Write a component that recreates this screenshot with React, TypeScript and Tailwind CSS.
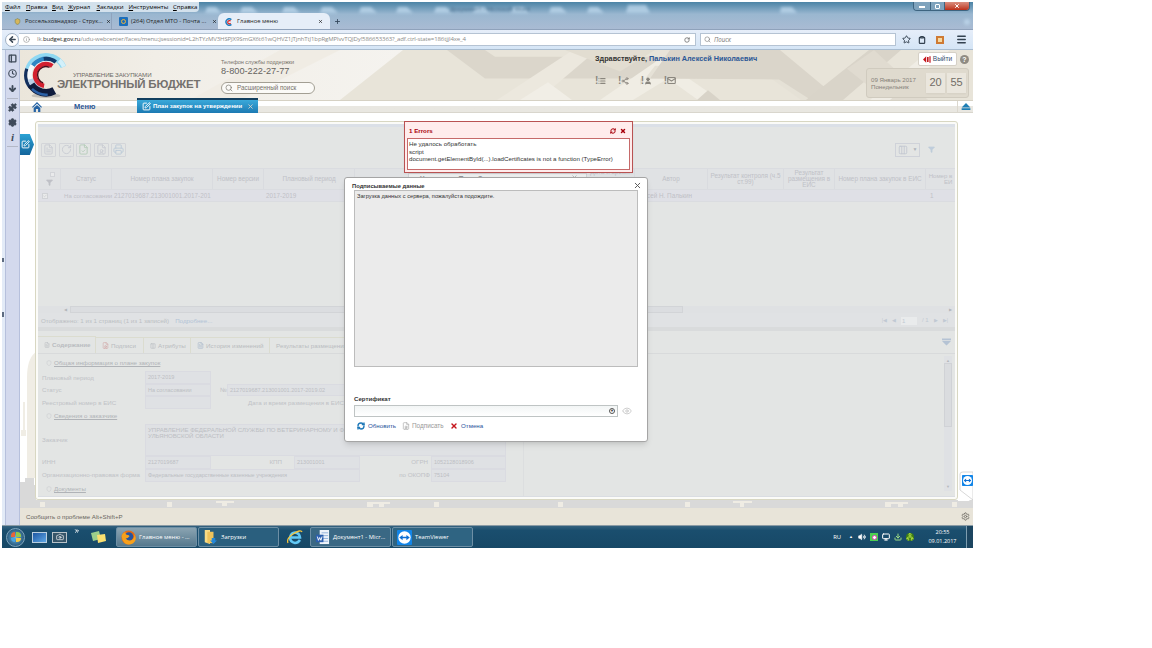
import type {ReactNode} from "react";
import clsx from "clsx";
import {
    ArrowLeft, ArrowDown, Camera, ChevronsRight, Clock, Download, FileText, Filter, Info, List, Mail,
    Menu, Monitor, Plus, Printer, Puzzle, RefreshCw, RotateCw, Search, Settings, Share2, SquarePen, Star,
    User, Volume2, X, Eye, FileCheck, FileUser, PanelLeft, Network, Shield, Clipboard, Columns3, Check
} from "lucide-react";

interface ChildrenProps {
    children?: ReactNode;
    className?: string;
}

const menuItems = [
    {label: "Файл", width: "w-[21px]"},
    {label: "Правка", width: "w-[26px]"},
    {label: "Вид", width: "w-[16px]"},
    {label: "Журнал", width: "w-[28.5px]"},
    {label: "Закладки", width: "w-[32px]"},
    {label: "Инструменты", width: "w-[44.5px]"},
    {label: "Справка", width: "w-[24px]"},
];

const TeamViewerIcon = ({className}: { className?: string }) => (
    <svg viewBox="0 0 16 16" className={className}>
        <rect width="16" height="16" rx="1" fill="#1285e8"/>
        <circle cx="8" cy="8" r="6.6" fill="#fff"/>
        <path d="M2.4 8 6 5.2v1.9h4V5.2L13.6 8 10 10.800V8.900H6v1.900z" fill="#0d6fd4"/>
    </svg>
);

// start and length of every ring segment are degrees
const logoRings = [
    {r: 21, start: 195, length: 100, width: 3.5, color: "#8fd8f3"},
    {r: 20, start: 285, length: 50, width: 6, color: "#8fd8f0"},
    {r: 20.5, start: 312, length: 23, width: 4.500, color: "#d3f0fa"},
    {r: 17, start: 215, length: 70, width: 4.5, color: "#2f86c4"},
    {r: 17, start: 262, length: 45, width: 4, color: "#123a6b"},
    {r: 21, start: 140, length: 58, width: 3.5, color: "#13305e"},
    {r: 17, start: 160, length: 55, width: 4.5, color: "#f5f8fb"},
    {r: 16.5, start: 110, length: 55, width: 6.5, color: "#b9cfe6"},
    {r: 18.5, start: 62, length: 85, width: 8, color: "#101c3c"},
    {r: 20.5, start: 85, length: 50, width: 2.500, color: "#2c62a8"},
    {r: 13.5, start: 215, length: 85, width: 2, color: "#e8eef5"},
    {r: 11.5, start: 100, length: 205, width: 4.500, color: "#d3202f"},
    {r: 8.8, start: 110, length: 185, width: 1.500, color: "#4a0d1b"},
];

const LogoMark = ({className}: { className?: string }) => (
    <svg viewBox="0 0 48 50" className={className} fill="none">
        <ellipse cx="24" cy="46.500" rx="15" ry="2.500" fill="#c4c1b9"/>
        {logoRings.map((ring, i) => (
            <circle key={i} cx="24" cy="25" r={ring.r} pathLength={360} stroke={ring.color} strokeWidth={ring.width}
                    strokeDasharray={`${ring.length} 360`} transform={`rotate(${ring.start} 24 25)`}/>
        ))}
    </svg>
);

const GlassReflections = () => (
    <svg viewBox="2 2 971 27" preserveAspectRatio="none" className="absolute inset-0 size-full">
        <defs>
            <filter id="glass" x="-20%" y="-60%" width="140%" height="220%"><feGaussianBlur stdDeviation="1.500"/></filter>
        </defs>
        <g filter="url(#glass)" fill="#c3dcf0" opacity="0.700">
            <path d="M205 13l2-6h9l5 6zM240 13l2-6h10l6 6zM282 13l2-6h10l6 6zM320 13l2-6h10l6 6zM359 13l2-6h10l6 6zM396 13l2-6h9l6 6zM434 13l2-6h10l6 6zM473 13l2-6h9l6 6zM511 13l2-6h10l6 6zM549 13l2-6h10l6 6zM587 13l2-6h9l6 6zM626 13l2-8h18l4 8zM780 13l1-6h11l5 6z"/>
            <circle cx="967" cy="22" r="3"/>
        </g>
    </svg>
);

const TitleBar = () => (
    <div className="relative h-[27px] bg-linear-to-b from-[#4b84a6] via-[#9ab7d0] via-45% to-[#a9bbd3]">
        <GlassReflections/>
        <span className="absolute top-[2px] left-[448px] text-[6px] leading-[10px] whitespace-nowrap text-[#4c6f8e] blur-[1px]">Документ1 - Microsoft Word</span>
        <div className="relative flex h-[11px] items-start justify-between">
            <div className="flex h-[10px] w-[197px] items-center rounded-br-sm bg-[#d3e1ec] pl-[3px] text-[6px] text-black">
                {menuItems.map(item => (
                    <span key={item.label} className={clsx("whitespace-nowrap first-letter:underline", item.width)}>
                        {item.label}
                    </span>
                ))}
            </div>
            <div className="mr-[3px] flex h-[9px] overflow-hidden rounded-b-sm border border-t-0 border-[#3d6480] text-white">
                <span className="flex w-[16px] items-end justify-center bg-[#7fa3bd] pb-[2px]"><i className="h-[2px] w-[6px] bg-white"/></span>
                <span className="flex w-[15px] items-center justify-center border-x border-[#3d6480] bg-[#7fa3bd]"><i className="size-[5px] rounded-[1px] border border-white"/></span>
                <span className="flex w-[24px] items-center justify-center bg-linear-to-b from-[#d98e80] to-[#bb2c15]"><X size={6} strokeWidth={4}/></span>
            </div>
        </div>
        <div className="relative flex h-[16px] items-center text-[5.850px] text-[#1c1c1c]">
            <div className="flex h-full w-[109px] items-center pt-px pl-[12px]">
                <Shield size={7} className="mr-[4px] fill-[#d7b65a] text-[#7a7f4a]"/>
                <span className="w-[81px] whitespace-nowrap">Россельхознадзор - Струк...</span>
                <X size={5} strokeWidth={3} className="shrink-0"/>
            </div>
            <div className="flex h-full w-[107px] items-center border-l border-[#8fa3bd] pt-px pl-[7px]">
                <span className="mr-[3px] flex size-[9px] shrink-0 items-center justify-center rounded-[1px] bg-[#1d6fbb]">
                    <i className="size-[5px] rounded-full border border-[#f0b43a]"/>
                </span>
                <span className="w-[81px] whitespace-nowrap">(264) Отдел МТО - Почта ...</span>
                <X size={5} strokeWidth={3} className="shrink-0"/>
            </div>
            <div className="flex h-full w-[112px] items-center rounded-t-md bg-[#e6eef8] pt-px pl-[7px]">
                <svg viewBox="0 0 10 10" className="mr-[4px] size-[8px]" fill="none">
                    <path d="M8 2A4 4 0 1 0 8 8" stroke="#1f7fc0" strokeWidth="1.800"/>
                    <path d="M7 4A2 2 0 1 0 7 6.500" stroke="#d22" strokeWidth="1.500"/>
                </svg>
                <span className="w-[81px] whitespace-nowrap">Главное меню</span>
                <X size={5} strokeWidth={3}/>
            </div>
            <Plus size={7} strokeWidth={3} className="ml-[4px] text-[#33475c]"/>
        </div>
    </div>
);

const AddressBar = () => (
    <div className="flex h-[21px] items-center border-y border-t-[#8fa2bb] border-b-[#a9bccf] bg-linear-to-b from-[#e6eef9] to-[#d5e5f6]">
        <div className="ml-[3px] flex size-[14px] items-center justify-center rounded-full border border-[#9fb0c4] bg-white">
            <ArrowLeft size={9} strokeWidth={4} className="text-[#3b4856]"/>
        </div>
        <div className="flex h-[13px] w-[677px] items-center border border-l-0 border-[#b5c3d3] bg-white pl-[4px] text-[6.050px] text-[#8b8b8b]">
            <Info size={7} className="mr-[7px]"/>
            <span className="w-[648px] whitespace-nowrap tracking-[-0.130px]">
                lk.<span className="text-[#222]">budget.gov.ru</span>/udu-webcenter/faces/menu;jsessionid=L2hTYzMV3HSPJX9SmGX6t61wQHVZ1jTjnhTtJ1bpRgMPlvvTQJDy!586653363?_adf.ctrl-state=186tjjl4xe_4
            </span>
            <RotateCw size={6} strokeWidth={3} className="mr-[5px] shrink-0 text-[#666]"/>
        </div>
        <div className="ml-[4px] flex h-[13px] w-[196px] items-center border border-[#b5c3d3] bg-white pl-[3px] text-[6.2px] text-[#777] italic">
            <Search size={7} className="mr-[3px]"/>Поиск
        </div>
        <div className="flex grow items-center pl-[6px] text-[#33414f]">
            <Star size={9} strokeWidth={2.5}/>
            <Clipboard size={8} strokeWidth={3.500} className="ml-[7px]"/>
            <span className="ml-[10px] flex size-[8px] items-center justify-center bg-[#cf7a33]"><i className="size-[4px] bg-[#f5d9a0]"/></span>
            <Menu size={11} strokeWidth={3.5} className="ml-[12px]"/>
        </div>
    </div>
);

const Sidebar = () => (
    <div className="flex w-[18px] shrink-0">
        <div className="flex w-[3px] flex-col bg-[#e3ebf7]">
            <i className="mt-[208px] h-[4px] w-[2px] bg-[#5d6b80]"/>
            <i className="mt-[50px] h-[5px] w-[2px] bg-[#5d6b80]"/>
        </div>
        <div className="flex w-[15px] flex-col items-center border-x border-x-[#b6c0dc] bg-[#d3d9ed] text-[#3f4a59]">
            <PanelLeft size={9} strokeWidth={3.500} className="mt-[4px]"/>
            <Clock size={9} strokeWidth={3} className="mt-[6px]"/>
            <ArrowDown size={9} strokeWidth={5} className="mt-[6px]"/>
            <i className="mt-[5px] h-px w-[11px] bg-[#b3b8c6]"/>
            <Puzzle size={9} className="mt-[4px] fill-current"/>
            <Settings size={9} strokeWidth={3} className="mt-[6px] fill-current"/>
            <span className="mt-[5px] font-['Liberation_Serif',serif] text-[11px] leading-[11px] font-bold italic">i</span>
            <i className="mt-[3px] h-px w-[11px] bg-[#b3b8c6]"/>
        </div>
    </div>
);

const HeaderPattern = () => (
    <svg viewBox="20 50 953 51" preserveAspectRatio="none" className="absolute inset-0 size-full">
        <defs>
            <linearGradient id="fade" x1="0" x2="1">
                <stop offset="0" stopColor="#ebe6db"/>
                <stop offset="0.350" stopColor="#f1eee7"/>
                <stop offset="1" stopColor="#f5f3ef"/>
            </linearGradient>
        </defs>
        <path d="M20 50h953v51H20z" fill="#e8e4d9"/>
        <path d="M20 50h383l-63 51H20z" fill="url(#fade)"/>
        <path d="M190 101l90-51h60l-100 51z" fill="#f0ece4"/>
        <path d="M447 50h38l10 7h165v22H485z" fill="#dbd6cb"/>
        <path d="M497 101l76-51h24l-59 51z" fill="#ece8de"/>
        <path d="M565 50h90l-35 22z" fill="#e2ddd1"/>
        <path d="M520 101l28-18 24 18z" fill="#f1eee6"/>
        <path d="M600 101l60-42 60 42h-22l-30-22-35 22z" fill="#f0ede4"/>
        <path d="M640 86l15-20h130l40 35h-24l-30-22H640z" fill="#e5e1d6"/>
        <path d="M670 50h110l60 51h-29l-32-21-129-1z" fill="#dad5ca"/>
        <path d="M697 101l11-10 12 10z" fill="#d8d3c8"/>
        <path d="M806 101l63-51h32l-58 51z" fill="#d9d4c9"/>
        <path d="M847 69l27-19 54 51h-42z" fill="#e0dbd0"/>
        <path d="M870 101l60-51h20l-60 51z" fill="#f0ede5"/>
    </svg>
);

const Notice = ({children}: ChildrenProps) => (
    <span className="flex w-[22.900px] items-center text-[10px] leading-[9px]">!{children}</span>
);

const Header = () => (
    <div className="relative h-[51px] shrink-0 border-b border-[#d6d1c4]">
        <HeaderPattern/>
        <div className="relative flex h-full">
            <LogoMark className="mt-px ml-[2px] h-[48px] w-[48px] shrink-0"/>
            <div className="-ml-[13px] w-[164px] pt-[21px] whitespace-nowrap">
                <div className="pl-[16px] text-[6.200px] leading-[8px] tracking-[-0.1px] text-[#6e6b67]">УПРАВЛЕНИЕ ЗАКУПКАМИ</div>
                <div className="text-[11.500px] leading-[11px] font-bold tracking-[-0.190px] text-[#74716e]">ЭЛЕКТРОННЫЙ БЮДЖЕТ</div>
            </div>
            <div className="w-[374px] pt-[8px] text-[#76726a]">
                <div className="text-[5.500px] leading-[8px]">Телефон службы поддержки</div>
                <div className="text-[9.2px] leading-[11px] text-[#66635e]">8-800-222-27-77</div>
                <div className="mt-[5px] flex h-[12px] w-[94px] items-center rounded-full border border-[#a39f94] bg-[#fbfaf7] pl-[3px] text-[6.300px]">
                    <Search size={8} className="mr-[4px]"/>Расширенный поиск
                </div>
            </div>
            <div className="w-[271px] pt-[3px] text-[7.270px] leading-[11px] font-bold text-[#333]">
                Здравствуйте, <span className="text-[#2b5796]">Палькин Алексей Николаевич</span>
                <div className="mt-[12px] flex text-[#8a867e]">
                    <Notice><List size={8} strokeWidth={3.500}/></Notice>
                    <Notice><Share2 size={8} strokeWidth={2.500}/></Notice>
                    <Notice><User size={8} strokeWidth={3} className="fill-current"/></Notice>
                    <Notice><Mail size={9} strokeWidth={3}/></Notice>
                </div>
            </div>
            <div className="flex flex-col text-[#86817a]">
                <div className="flex h-[18px] items-center justify-end gap-[3px]">
                    <div className="flex h-[14px] w-[39px] items-center justify-center gap-[2px] rounded-[2px] border border-[#d5d0c6] bg-white text-[6.600px] text-[#37516f]">
                        <svg viewBox="0 0 10 8" className="h-[7px] w-[8px]"><path d="M0 4l4-4v8zM5 1h2v6H5zM8 0h1.500v8H8z" fill="#c4161c"/></svg>
                        Выйти
                    </div>
                    <span className="flex size-[9px] items-center justify-center rounded-full bg-[#8f8b83] text-[7px] leading-none font-bold text-white">?</span>
                </div>
                <div className="flex h-[30px] w-[103px] items-center rounded-[3px] border border-[#d0cbbf] bg-[#dfdace] pl-[4px] text-[6.150px] leading-[7.500px]">
                    <div className="w-[55px] whitespace-nowrap">09 Январь 2017<br/>Понедельник</div>
                    <span className="flex h-[20px] w-[19px] items-center justify-center bg-[#eae6dd] text-[11px] text-[#716d66] shadow-xs">20</span>
                    <span className="ml-[2px] flex h-[20px] w-[19px] items-center justify-center bg-[#eae6dd] text-[11px] text-[#716d66] shadow-xs">55</span>
                </div>
            </div>
        </div>
    </div>
);

const NavBar = () => (
    <div className="flex h-[12px] shrink-0 items-center border-b border-[#d9d6cd] bg-linear-to-b from-white from-50% to-[#e9e7e1] to-50%">
        <svg viewBox="0 0 12 12" className="ml-[12px] size-[10px]">
            <path d="M6 0l6 6-1 1-5-4.800L1 7 0 6z" fill="#2462a3"/><path d="M6 3.500l4 3.700V12H7.300V8.500H4.700V12H2V7.200z" fill="#2462a3"/>
        </svg>
        <span className="ml-[32px] w-[63px] text-[7.500px] font-bold text-[#2b5796]">Меню</span>
        <div className="z-10 -mt-[3px] flex h-[15px] w-[121px] items-center border-t-2 border-[#123f5f] bg-linear-to-b from-[#3aa9da] to-[#1c7ab3] pl-[5px] text-[6px] font-bold text-white">
            <SquarePen size={9} strokeWidth={2.500} className="mr-[2px] shrink-0"/>
            <span className="w-[94px] pt-px whitespace-nowrap">План закупок на утверждении</span>
            <X size={7} strokeWidth={3} className="mt-px shrink-0 text-[#d5d0c8]"/>
        </div>
        <div className="ml-auto flex h-full w-[16px] items-center justify-center border-l border-[#dcd8ce]">
            <svg viewBox="0 0 10 8" className="h-[7px] w-[10px]"><path d="M5 0l5 5H0zM0 6h10v2H0z" fill="#1e7fb5"/></svg>
        </div>
    </div>
);

const ToolButton = ({children}: ChildrenProps) => (
    <div className="flex h-[14px] w-[15px] items-center justify-center rounded-[1px] border border-[#d3d5d9] text-[#c8ccd2]">
        {children}
    </div>
);

const Th = ({children, className}: ChildrenProps) => (
    <div className={clsx("flex shrink-0 items-center justify-center border-r border-[#d9dbdf] text-center leading-[6px]", className)}>
        {children}
    </div>
);

const PlansTable = () => (
    <div className="shrink-0 overflow-hidden text-[6.350px] text-[#bfc1c7]">
        <div className="flex h-[22px] border-y border-[#dadce0] bg-[#e0e2e4]">
            <Th className="w-[23px] flex-col gap-[2px]">
                <i className="ml-[6px] size-[5px] border border-[#d2d4d8] bg-[#e9eaeb]"/>
                <Filter size={7} className="fill-current"/>
            </Th>
            <Th className="w-[51px]">Статус</Th>
            <Th className="w-[101px]">Номер плана закупок</Th>
            <Th className="w-[51px]">Номер версии</Th>
            <Th className="w-[91px]">Плановый период</Th>
            <Th className="w-[231px]"/>
            <Th className="w-[49px] items-start whitespace-nowrap">Дата и время</Th>
            <Th className="w-[73px]">Автор</Th>
            <Th className="w-[76px] whitespace-nowrap">Результат контроля (ч.5<br/>ст.99)</Th>
            <Th className="w-[51px]">Результат<br/>размещения в<br/>ЕИС</Th>
            <Th className="w-[91px] whitespace-nowrap">Номер плана закупок в ЕИС</Th>
            <Th className="w-[30px] text-right text-[6.100px] whitespace-nowrap">Номер в<br/>ЕИ</Th>
        </div>
        <div className="flex h-[12px] items-center border-b border-[#dadce0] bg-[#dfe0e6] leading-[12px] whitespace-nowrap">
            <div className="w-[26px] pl-[4px]">
                <Check size={6} strokeWidth={3} className="border border-[#d0d2d6] bg-[#e9eaeb]"/>
            </div>
            <div className="w-[50px] text-[6.100px]">На согласовании</div>
            <div className="w-[99px] text-[6.300px]">2127019687.213001001.2017-201</div>
            <div className="w-[53px]"/>
            <div className="w-[367px]">2017-2019</div>
            <div className="w-[297px] pl-[14px]">сей Н. Палькин</div>
            <div>1</div>
        </div>
    </div>
);

const Value = ({children, className}: ChildrenProps) => (
    <div className={clsx("flex h-full shrink-0 items-center border border-[#dadbe1] bg-[#dfe1e4] pl-[2px] text-[5.500px] whitespace-nowrap text-[#bcbec3]", className)}>
        {children}
    </div>
);

const SectionTitle = ({children, className}: ChildrenProps) => (
    <div className={clsx("flex items-center gap-[2px] pl-[4px] text-[6.200px] text-[#b0b3b7]", className)}>
        <Shield size={6} className="text-[#c6c9cc]"/>
        <span className="underline">{children}</span>
    </div>
);

const Details = () => (
    <div className="flex grow">
        <div className="flex w-[486px] flex-col border-r border-[#dcdedf] pl-[4px] text-[6.200px] text-[#c0c2c6]">
            <SectionTitle className="h-[17px]">Общая информация о плане закупок</SectionTitle>
            <div className="flex h-[12.500px] items-center">
                <span className="w-[103px]">Плановый период</span>
                <Value className="w-[66px]">2017-2019</Value>
            </div>
            <div className="flex h-[12.500px] items-center">
                <span className="w-[103px]">Статус</span>
                <Value className="w-[66px]">На согласовании</Value>
                <span className="w-[16px] pl-[9px]">№</span>
                <Value className="w-[150px]">2127019687.213001001.2017-2019.02</Value>
            </div>
            <div className="flex h-[12.500px] items-center">
                <span className="w-[103px]">Реестровый номер в ЕИС</span>
                <Value className="w-[66px]"/>
                <span className="pl-[37px] whitespace-nowrap">Дата и время размещения в ЕИС</span>
            </div>
            <SectionTitle className="h-[15px]">Сведения о заказчике</SectionTitle>
            <div className="flex h-[32px] items-center">
                <span className="w-[103px]">Заказчик</span>
                <Value className="w-[361px] items-start pt-[2px] text-[6.050px] leading-[6px]">
                    УПРАВЛЕНИЕ ФЕДЕРАЛЬНОЙ СЛУЖБЫ ПО ВЕТЕРИНАРНОМУ И ФИТОСАН<br/>УЛЬЯНОВСКОЙ ОБЛАСТИ
                </Value>
            </div>
            <div className="flex h-[13px] items-center">
                <span className="w-[103px]">ИНН</span>
                <Value className="w-[66px]">2127019687</Value>
                <span className="w-[83px] pr-[12px] text-right">КПП</span>
                <Value className="w-[66px]">213001001</Value>
                <span className="w-[71px] pr-[3px] text-right">ОГРН</span>
                <Value className="w-[75px]">1052128018906</Value>
            </div>
            <div className="flex h-[13px] items-center">
                <span className="w-[103px] whitespace-nowrap">Организационно-правовая форма</span>
                <Value className="w-[215px]">Федеральные государственные казенные учреждения</Value>
                <span className="w-[71px] pr-[1px] text-right">по ОКОПФ</span>
                <Value className="w-[75px]">75104</Value>
            </div>
            <SectionTitle className="h-[14px]">Документы</SectionTitle>
        </div>
        <div className="mt-[2px] mr-[3px] ml-auto flex h-[135px] w-[8px] flex-col items-center justify-between bg-[#dfe1e4] py-[2px] text-[4px] leading-[5px] text-[#b4b7bb]">
            ▲
            <i className="mb-auto h-[64px] w-full border border-[#d0d2d6] bg-[#dadcdf]"/>
            ▼
        </div>
    </div>
);

const DetailTab = ({children, className}: ChildrenProps) => (
    <div className={clsx("flex shrink-0 items-center gap-[2px] border-t border-r border-[#dbdccf] pl-[6px] whitespace-nowrap", className)}>
        {children}
    </div>
);

const Workspace = () => (
    <div className="flex h-[379px] w-[923px] flex-col rounded-[3px] border border-[#d8d7c2] bg-[#fbfbf8] p-[2px]">
        <div className="flex grow flex-col overflow-hidden bg-[#e3e5e4]">
            <div className="h-[3px] shrink-0 bg-[#dbe0e7]"/>
            <div className="flex h-[41px] shrink-0 items-center gap-[2.600px] pt-[4px] pl-[3px]">
                <ToolButton><FileText size={11}/></ToolButton>
                <ToolButton><RotateCw size={11}/></ToolButton>
                <ToolButton><FileCheck size={11} className="text-[#b5ccb9]"/></ToolButton>
                <ToolButton><FileUser size={11}/></ToolButton>
                <ToolButton><Printer size={11} className="text-[#bccbd8]"/></ToolButton>
                <div className="mr-[5px] ml-auto flex h-[14px] w-[25px] items-center gap-[4px] border border-[#cfd2d9] pl-[2px] text-[5px] text-[#aeb3ba]">
                    <Columns3 size={10} className="text-[#c0c7d0]"/>▼
                </div>
                <Filter size={7} className="mr-[20px] fill-current text-[#bfcddb]"/>
            </div>
            <PlansTable/>
            <div className="h-[104px] shrink-0"/>
            <div className="flex h-[7px] shrink-0 items-center bg-[#dfe1e3] pl-[26px] text-[4px] text-[#b4b7bb]">
                ◀<i className="ml-[3px] h-full w-[613px] border border-[#d2d4d7] bg-[#dbdde0]"/>
                <span className="mr-[3px] ml-auto">▶</span>
            </div>
            <div className="flex h-[14px] shrink-0 items-center bg-[#e0e2e4] pt-px pl-[3px] text-[6.200px] text-[#bcbfc3]">
                Отображено: 1 из 1 страниц (1 из 1 записей)
                <span className="ml-[6px] text-[#b3c3d6]">Подробнее...</span>
                <div className="mr-[7px] ml-auto flex items-center gap-[5px] text-[5px] text-[#c0c9d3]">
                    <span>|◀</span><span>◀</span>
                    <span className="h-[8px] w-[16px] bg-[#e9ebec] pl-px text-[6px] leading-[8px]">1</span>
                    <span className="text-[6px]">/ 1</span><span>▶</span><span>▶|</span>
                </div>
            </div>
            <div className="h-[4px] shrink-0 bg-[#d9dbdc]"/>
            <div className="flex h-[23px] shrink-0 items-end border-b border-[#d8dadb] text-[6.250px] text-[#b9bcc0]">
                <DetailTab className="h-[17px] w-[58px] font-bold"><FileText size={6}/>Содержание</DetailTab>
                <DetailTab className="h-[16px] w-[48px]"><FileUser size={7} className="text-[#d3a9a9]"/>Подписи</DetailTab>
                <DetailTab className="h-[16px] w-[47px]"><Columns3 size={6}/>Атрибуты</DetailTab>
                <DetailTab className="h-[16px] w-[79px]"><FileText size={7} className="text-[#a9b9cc]"/>История изменений</DetailTab>
                <DetailTab className="h-[16px] w-[110px]">Результаты размещения</DetailTab>
                <svg viewBox="0 0 10 8" className="mr-[4px] mb-[7px] ml-auto h-[8px] w-[9px]"><path d="M0 0h10v2H0zM0 3h10L5 8z" fill="#b5c3d4"/></svg>
            </div>
            <Details/>
            <div className="h-[3px] shrink-0 bg-[#dadde2]"/>
        </div>
    </div>
);

const PageBackdrop = () => (
    <svg viewBox="20 113 953 395" className="absolute inset-0 size-full">
        <path d="M20 500h953v8H20z" fill="#d9d9d9"/>
        <path d="M20 482h5v-4h9v7h2v20H20z" fill="#d9d9d9"/>
        <path d="M27 478v-100q0-20 9-26v126zM21 430h5v6h-5zM23 402h2v30h-2z" fill="#f0ede5"/>
        <path d="M40 502h5v5h-5zM167 502h5v5h-5zM216 501h18v2h-7v3h-5v-3h-6zM367 502h23v2h-6v3h-5v-3h-6v3h-6zM434 502h5v5h-5zM558 502h5v5h-5zM685 502h5v5h-5zM733 501h19v2h-8v4h-4v-4h-7zM885 502h23v2h-5v3h-5v-3h-7v3h-6zM952 502h5v5h-5z" fill="#efece4"/>
        <path d="M960 474q0-2 3-2h10v28l-13-10z" fill="#fff" stroke="#c6c6c6" strokeWidth="0.700"/>
        <path d="M958 498h8l4 3h-12z" fill="#fff"/>
    </svg>
);

const ErrorPopup = () => (
    <div className="absolute top-[119px] left-[402px] z-30 flex h-[52px] w-[229px] flex-col border border-[#b95252] bg-[#ffecec] p-px font-['Liberation_Sans',Arial,sans-serif] shadow-xs">
        <div className="flex h-[15px] items-center pl-[3px] text-[6.200px] font-bold text-[#a8000b]">
            1 Errors
            <RefreshCw size={6} strokeWidth={4} className="mr-[4px] ml-auto"/>
            <X size={6} strokeWidth={6} className="mr-[5px]"/>
        </div>
        <div className="mx-px h-[32px] border border-[#c66a6a] bg-white pt-px pl-[1px] text-[6.180px] leading-[7.700px] text-[#333]">
            Не удалось обработать<br/>script<br/>
            <span className="whitespace-nowrap">document.getElementById(...).loadCertificates is not a function (TypeError)</span>
        </div>
    </div>
);

const SignDialog = () => (
    <div className="absolute top-[175px] left-[342px] z-20 flex h-[265px] w-[304px] flex-col rounded-[3px] border border-[#a5a5a5] bg-white px-[9px] font-['Liberation_Sans',Arial,sans-serif] text-[6.400px] text-[#333] shadow-md">
        <div className="flex h-[12px] shrink-0 items-end justify-between font-bold">
            <span className="-ml-[2px] text-[5.800px] leading-[8px]">Подписываемые данные</span>
            <X size={9} strokeWidth={2.500} className="-mr-[4px] text-[#555]"/>
        </div>
        <div className="h-[177px] w-[284px] shrink-0 border border-[#bcbcbc] bg-[#ebebeb] pt-px pl-[2px] text-[5.680px] leading-[8px]">
            Загрузка данных с сервера, пожалуйста подождите.
        </div>
        <div className="mt-[27px] h-[10px] text-[6.100px] leading-[10px] font-bold">Сертификат</div>
        <div className="mt-px flex items-center">
            <div className="flex h-[12px] w-[264px] items-center justify-end border border-[#bfc4c4] bg-linear-to-b from-[#f2f5f5] to-white pr-[2px]">
                <span className="flex size-[6px] items-center justify-center rounded-full border border-[#555] text-[4px] leading-none">▼</span>
            </div>
            <Eye size={10} className="ml-[4px] text-[#c4c4c4]"/>
        </div>
        <div className="mt-[4px] flex h-[10px] items-center text-[#2a549b]">
            <RefreshCw size={8} strokeWidth={4} className="mr-[3px] ml-[3px] text-[#1e78b8]"/>
            <span className="w-[34px] text-[6.200px]">Обновить</span>
            <FileUser size={8} className="mr-[2px] text-[#aaa]"/>
            <span className="w-[38px] text-[#999]">Подписать</span>
            <X size={8} strokeWidth={4} className="mr-[3px] text-[#c5161c]"/>
            <span className="text-[6.200px]">Отмена</span>
        </div>
    </div>
);

const TaskButton = ({children, className}: ChildrenProps) => (
    <div className={clsx("flex h-[20px] shrink-0 items-center rounded-[2px] border border-[#6d8fa5] pl-[4px] whitespace-nowrap", className)}>
        {children}
    </div>
);

const Taskbar = () => (
    <div className="flex h-[23px] shrink-0 items-center border-t border-[#8b9ba5] bg-linear-to-b from-[#34627f] via-[#1a4e6e] via-20% to-[#174866] text-[5.850px] text-white">
        <span className="ml-[4px] grid size-[19px] grid-cols-2 gap-px rounded-full border border-[#7fa5bd] bg-radial from-[#6ab4e0] to-[#143b5a] p-[3.500px]">
            <i className="rounded-tl-full bg-[#e8643a]"/><i className="rounded-tr-sm bg-[#93c94b]"/>
            <i className="rounded-bl-sm bg-[#4aa5e2]"/><i className="rounded-br-full bg-[#f6c944]"/>
        </span>
        <span className="ml-[7px] h-[11px] w-[15px] border border-[#b9cfe0] bg-linear-to-br from-[#1c57a3] to-[#60a8e6]"/>
        <span className="ml-[5px] flex h-[11px] w-[15px] items-center justify-center border border-[#b9c3c9] bg-[#365569]"><Camera size={8}/></span>
        <span className="mb-[12px] ml-[7px] w-[16px]"><ChevronsRight size={6} strokeWidth={4}/></span>
        <svg viewBox="0 0 16 14" className="mr-[9px] h-[14px] w-[16px]">
            <path d="M1 3l8-2 2 8-8 2z" fill="#9ccf8b"/><path d="M7 5l8-1 1 7-8 2z" fill="#f8df70"/>
        </svg>
        <TaskButton className="mr-px ml-px w-[81px] gap-[3px] bg-linear-to-b from-[#8ba4b2] to-[#56798e]">
            <svg viewBox="0 0 16 16" className="size-[15px] shrink-0">
                <circle cx="8" cy="8" r="7.500" fill="#e66a12"/><circle cx="8.500" cy="7" r="4.600" fill="#28559f"/>
                <path d="M1 5q2-3 4-3-1 2 1 3 3 0 3 2-2 2-4 2 2 3 6 2 4-2 3-7 4 6-1 10-5 3-9 0Q0 10 1 5z" fill="#f7a11c"/>
            </svg>
            Главное меню - ...
        </TaskButton>
        <TaskButton className="w-[81px] gap-[4px] bg-[#2a5f7e]">
            <svg viewBox="0 0 16 18" className="h-[16px] w-[14px]">
                <path d="M2 1h6v16l-6-2z" fill="#f8dc86"/><path d="M5 3h7v13H5z" fill="#eec35b"/><path d="M10 10h4v3h2l-4 4-4-4h2z" fill="#2387d8"/>
            </svg>
            Загрузки
        </TaskButton>
        <svg viewBox="0 0 16 16" className="mx-[7.500px] size-[16px]" fill="none">
            <path d="M13 11Q11 14 8 14 3 13 3 8.500 4 3.500 8 3.500 12.500 4 13 8.500H4" stroke="#62c8f4" strokeWidth="2.500"/>
            <path d="M1 14Q-1 10 6 5 14 0 15 3" stroke="#f3c33c" strokeWidth="1.300"/>
        </svg>
        <TaskButton className="mr-px w-[81px] gap-[3px] bg-[#3a6884]">
            <svg viewBox="0 0 16 16" className="size-[15px] shrink-0">
                <path d="M5 0h10v15H5z" fill="#eef3fa"/><path d="M7 3h7M7 6h7M7 9h7M7 12h7" stroke="#8fb0da"/>
                <path d="M1 5h8v8H1z" fill="#2c5fae"/><path d="M2.500 7l1.200 4L5 8l1.300 3 1.200-4" stroke="#fff" fill="none"/>
            </svg>
            Документ1 - Micr...
        </TaskButton>
        <TaskButton className="w-[81px] gap-[3px] bg-[#2f6482]"><TeamViewerIcon className="size-[15px] shrink-0"/>TeamViewer</TaskButton>
        <div className="ml-auto flex h-full items-center">
            <span className="mr-[8px]">RU</span>
            <span className="mr-[5px] text-[4px]">▲</span>
            <Volume2 size={8} className="mr-[4px] fill-current"/>
            <span className="mr-[4px] flex size-[8px] items-center justify-center bg-[#4cce52]"><i className="size-[5px] rounded-full border border-[#e33cb5] bg-white"/></span>
            <Monitor size={8} strokeWidth={3} className="mr-[4px]"/>
            <Download size={8} strokeWidth={3} className="mr-[4px] text-[#9fdd86]"/>
            <Network size={8} strokeWidth={3} className="mr-[14px] rounded-full bg-[#3d7c16] text-[#a7d940]"/>
            <span className="w-[29px] text-center text-[5.500px] leading-[9.500px] whitespace-nowrap">20:55<br/>09.01.2017</span>
            <i className="ml-[9px] h-full w-[7px] border-l border-[#7d9db0] bg-[#1c4560]"/>
        </div>
    </div>
);

export default function App() {
    return (
        <div className="h-[648px] w-[1152px] overflow-hidden bg-white p-[2px] font-['Open_Sans','Noto_Sans',sans-serif]">
            <div className="relative flex h-[546px] w-[971px] flex-col overflow-hidden">
                <TitleBar/>
                <AddressBar/>
                <div className="flex h-[475px] shrink-0 font-['Liberation_Sans',Arial,sans-serif]">
                    <Sidebar/>
                    <div className="flex w-[953px] flex-col bg-white">
                        <Header/>
                        <NavBar/>
                        <div className="relative h-[395px] shrink-0">
                            <PageBackdrop/>
                            <div className="relative flex pt-[8px]">
                                <div className="w-[15px] pt-[13px]">
                                    <div className="flex h-[21px] w-[14px] items-center bg-linear-to-b from-[#2ba2d4] to-[#14659c] pl-px text-white [clip-path:polygon(0_0,70%_0,100%_50%,70%_100%,0_100%)]">
                                        <SquarePen size={9} strokeWidth={2.500}/>
                                    </div>
                                </div>
                                <Workspace/>
                                <TeamViewerIcon className="mt-[354px] ml-[4px] size-[11px]"/>
                            </div>
                        </div>
                        <div className="flex h-[17px] shrink-0 items-center justify-between bg-[#e8e4d9] px-[6px] text-[6.150px] text-[#6a665f]">
                            Сообщить о проблеме Alt+Shift+P
                            <Settings size={9} strokeWidth={2.500} className="-mr-[3px] text-[#77746d]"/>
                        </div>
                    </div>
                </div>
                <Taskbar/>
                {/* title of the approval window showing above the signing dialog */}
                <div className="absolute top-[171px] left-[406px] z-10 flex h-[10px] w-[179px] justify-between border border-[#cfd1d3] bg-[#eceded] pr-[8px] pl-[11px] font-['Liberation_Sans',Arial,sans-serif] text-[7px] leading-[9px] font-bold text-[#909295]">
                    Утвердить План Закупок
                    <X size={7}/>
                </div>
                <SignDialog/>
                <ErrorPopup/>
            </div>
        </div>
    );
}
